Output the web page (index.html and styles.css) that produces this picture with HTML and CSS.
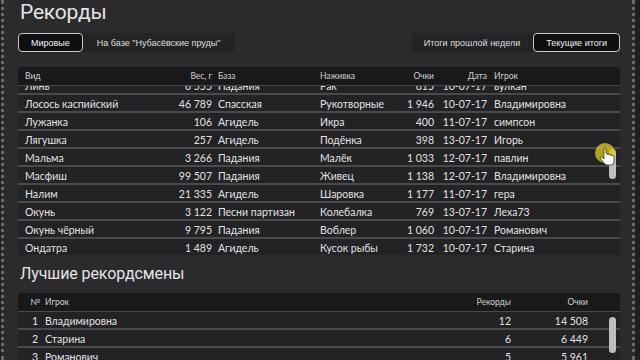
FILE: index.html
```html
<!DOCTYPE html>
<html lang="ru">
<head>
<meta charset="utf-8">
<title>Рекорды</title>
<link rel="stylesheet" href="styles.css">
</head>
<body>
<div class="frame">
  <h1 class="title">Рекорды</h1>
  <div class="tabs-row">
    <div class="tabs">
      <span class="tab active">Мировые</span>
      <span class="tab">На базе "Нубасёвские пруды"</span>
    </div>
    <div class="tabs">
      <span class="tab">Итоги прошлой недели</span>
      <span class="tab active">Текущие итоги</span>
    </div>
  </div>

  <div class="table records">
    <div class="row head">
      <span>Вид</span><span class="r">Вес, г</span><span class="pl">База</span><span>Наживка</span><span class="r">Очки</span><span class="r">Дата</span><span class="pl2">Игрок</span>
    </div>
    <div class="body rec-body">
      <div class="scroll-inner">
        <div class="row"><span>Линь</span><span class="r">6 555</span><span class="pl">Падания</span><span>Рак</span><span class="r">815</span><span class="r">10-07-17</span><span class="pl2">вулкан</span></div>
        <div class="row"><span>Лосось каспийский</span><span class="r">46 789</span><span class="pl">Спасская</span><span>Рукотворные</span><span class="r">1 946</span><span class="r">10-07-17</span><span class="pl2">Владимировна</span></div>
        <div class="row"><span>Лужанка</span><span class="r">106</span><span class="pl">Агидель</span><span>Икра</span><span class="r">400</span><span class="r">11-07-17</span><span class="pl2">симпсон</span></div>
        <div class="row"><span>Лягушка</span><span class="r">257</span><span class="pl">Агидель</span><span>Подёнка</span><span class="r">398</span><span class="r">13-07-17</span><span class="pl2">Игорь</span></div>
        <div class="row"><span>Мальма</span><span class="r">3 266</span><span class="pl">Падания</span><span>Малёк</span><span class="r">1 033</span><span class="r">12-07-17</span><span class="pl2">павлин</span></div>
        <div class="row"><span>Масфиш</span><span class="r">99 507</span><span class="pl">Падания</span><span>Живец</span><span class="r">1 138</span><span class="r">12-07-17</span><span class="pl2">Владимировна</span></div>
        <div class="row"><span>Налим</span><span class="r">21 335</span><span class="pl">Агидель</span><span>Шаровка</span><span class="r">1 177</span><span class="r">11-07-17</span><span class="pl2">гера</span></div>
        <div class="row"><span>Окунь</span><span class="r">3 122</span><span class="pl">Песни партизан</span><span>Колебалка</span><span class="r">769</span><span class="r">13-07-17</span><span class="pl2">Леха73</span></div>
        <div class="row"><span>Окунь чёрный</span><span class="r">9 795</span><span class="pl">Падания</span><span>Воблер</span><span class="r">1 060</span><span class="r">10-07-17</span><span class="pl2">Романович</span></div>
        <div class="row"><span>Ондатра</span><span class="r">1 489</span><span class="pl">Агидель</span><span>Кусок рыбы</span><span class="r">1 732</span><span class="r">10-07-17</span><span class="pl2">Старина</span></div>
      </div>
      <div class="thumb thumb-rec"></div>
      <svg class="cursor" width="26" height="34" viewBox="0 0 26 34">
        <circle cx="11" cy="11" r="10" fill="rgba(222,200,20,0.78)"/>
        <path d="M10 8 v9 l-2 -2 q-2 -1 -2 1 l4 5 q1 2 3 2 h4 q3 0 3 -3 v-5 q0 -2 -2 -2 q-1 0 -1 1 q0 -2 -2 -2 q-1 0 -1 1 q0 -2 -2 -2 v-3 q0 -2 -1 -2 q-1 0 -1 2z" fill="#fff" stroke="#333" stroke-width="0.8"/>
      </svg>
    </div>
  </div>

  <h2 class="subtitle">Лучшие рекордсмены</h2>

  <div class="table leaders">
    <div class="row head">
      <span class="num">№</span><span>Игрок</span><span class="r">Рекорды</span><span class="r">Очки</span>
    </div>
    <div class="body lead-body">
      <div class="row"><span class="num">1</span><span>Владимировна</span><span class="r">12</span><span class="r">14 508</span></div>
      <div class="row"><span class="num">2</span><span>Старина</span><span class="r">6</span><span class="r">6 449</span></div>
      <div class="row"><span class="num">3</span><span>Романович</span><span class="r">5</span><span class="r">5 961</span></div>
      <div class="thumb thumb-lead"></div>
    </div>
  </div>
</div>
</body>
</html>
```
FILE: styles.css
```css
html, body {
  margin: 0;
  padding: 0;
  height: 100%;
  overflow: hidden;
}
body {
  background: #1f1f21;
  font-family: Lato, "Liberation Sans", Arial, sans-serif;
  color: #e2e2e2;
}
.frame {
  box-sizing: border-box;
  width: 634px;
  height: 360px;
  margin-left: 1px;
  padding: 0 12px 0 14px;
  background: #2b2b2e;
  border-left: 3px dotted #6a6a6c;
  border-right: 3px dotted #6a6a6c;
}
.title {
  margin: 0;
  padding: 0 0 0 2px;
  font-family: Roboto, "Open Sans", sans-serif;
  font-weight: 400;
  font-size: 21px;
  line-height: 25px;
  letter-spacing: -0.2px;
  color: #e4e4e4;
}
.tabs-row {
  display: flex;
  justify-content: space-between;
  margin-top: 8px;
  width: 602px;
}
.tabs {
  display: flex;
  background: #242426;
  border-radius: 4px;
  height: 19px;
}
.tab {
  display: flex;
  align-items: center;
  padding: 0 13px;
  font-family: "Liberation Sans", Arial, sans-serif;
  font-size: 9px;
  color: #ddd;
  border-radius: 4px;
  border: 1px solid transparent;
}
.tab.active {
  background: #0f0f10;
  border: 1px solid #c8c8c8;
  color: #f0f0f0;
}
.tabs:first-child .tab.active { padding: 0 12px; }
.tabs:last-child .tab:first-child { padding: 0 12px 0 11px; }
.tabs:last-child .tab.active { padding: 0 12px; }

.table {
  width: 602px;
  background: #232325;
  border-radius: 4px 4px 0 0;
}
.records { margin-top: 15px; }
.row {
  display: grid;
  height: 14px;
  padding-top: 2px;
  line-height: 14px;
  border-bottom: 2px solid #4a4a4d;
  font-size: 10.5px;
  white-space: nowrap;
}
.records .row {
  grid-template-columns: 125px 62px 108px 80px 34px 53px 1fr;
  padding-left: 7px;
}
.row.head {
  height: 17px;
  padding-top: 1px;
  line-height: 17px;
  background: #19191b;
  border-radius: 4px 4px 0 0;
  font-size: 8.5px;
  color: #d0d0d0;
  border-bottom: 1px solid #4a4a4d;
}
.r { text-align: right; }
.pl { padding-left: 6px; }
.pl2 { padding-left: 7px; }
.body {
  position: relative;
  overflow: hidden;
}
.rec-body { height: 169px; }
.scroll-inner { margin-top: -9px; }
.thumb {
  position: absolute;
  right: 4px;
  width: 7px;
  background: #bdbdbd;
  border-radius: 4px;
}
.thumb-rec { top: 63px; height: 30px; }
.cursor {
  position: absolute;
  right: 0;
  top: 56px;
}
.subtitle {
  margin: 8px 0 0 2px;
  font-family: Roboto, "Open Sans", sans-serif;
  font-weight: 400;
  font-size: 16px;
  line-height: 22px;
  letter-spacing: -0.1px;
  color: #e4e4e4;
}
.leaders { margin-top: 8px; }
.leaders .row {
  grid-template-columns: 27px 404px 62px 77px;
  padding-left: 0;
}
.num { text-align: right; padding-right: 7px; }
.leaders .row.head .num { padding-right: 5px; }
.lead-body { height: 60px; }
.thumb-lead { top: 5px; height: 36px; }
```
